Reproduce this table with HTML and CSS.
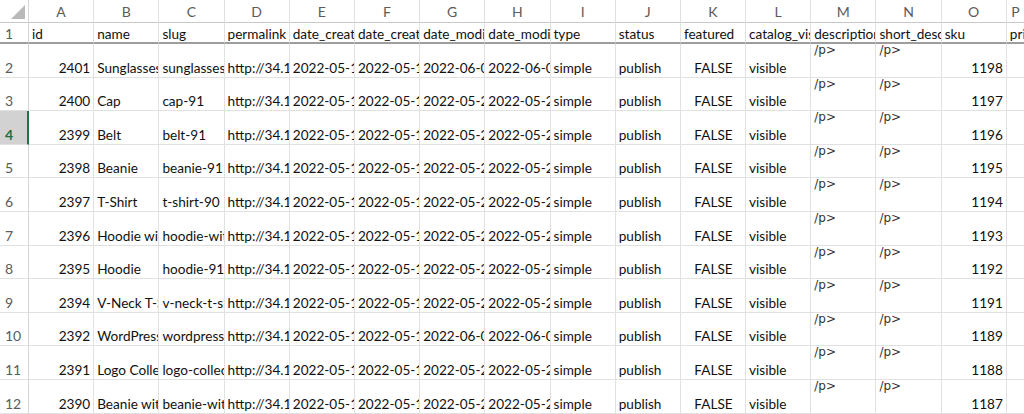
FILE: index.html
```html
<!DOCTYPE html>
<html>
<head>
<meta charset="utf-8">
<link rel="stylesheet" href="styles.css">
</head>
<body>
<div class="sheet">
  <div class="corner"><span class="tri"></span></div>
  <div class="ch">A</div><div class="ch">B</div><div class="ch">C</div><div class="ch">D</div><div class="ch">E</div><div class="ch">F</div><div class="ch">G</div><div class="ch">H</div><div class="ch">I</div><div class="ch">J</div><div class="ch">K</div><div class="ch">L</div><div class="ch">M</div><div class="ch">N</div><div class="ch">O</div><div class="ch last">P</div>

  <div class="rh r1">1</div>
  <div class="c r1">id</div><div class="c r1">name</div><div class="c r1">slug</div><div class="c r1">permalink</div><div class="c r1">date_created</div><div class="c r1">date_created_gmt</div><div class="c r1">date_modified</div><div class="c r1">date_modified_gmt</div><div class="c r1">type</div><div class="c r1">status</div><div class="c r1">featured</div><div class="c r1">catalog_visibility</div><div class="c r1">description</div><div class="c r1">short_description</div><div class="c r1">sku</div><div class="c r1 last">price</div>

  <div class="rh">2</div>
  <div class="c n">2401</div><div class="c">Sunglasses</div><div class="c">sunglasses</div><div class="c">http://34.122.12.56/product/sunglasses/</div><div class="c">2022-05-18T10:44:12</div><div class="c">2022-05-18T10:44:12</div><div class="c">2022-06-02T09:11:40</div><div class="c">2022-06-02T09:11:40</div><div class="c">simple</div><div class="c">publish</div><div class="c ctr">FALSE</div><div class="c">visible</div><div class="c top">/p&gt;</div><div class="c top">/p&gt;</div><div class="c n">1198</div><div class="c last"></div>

  <div class="rh">3</div>
  <div class="c n">2400</div><div class="c">Cap</div><div class="c">cap-91</div><div class="c">http://34.122.12.56/product/cap-91/</div><div class="c">2022-05-18T10:44:12</div><div class="c">2022-05-18T10:44:12</div><div class="c">2022-05-20T08:01:33</div><div class="c">2022-05-20T08:01:33</div><div class="c">simple</div><div class="c">publish</div><div class="c ctr">FALSE</div><div class="c">visible</div><div class="c top">/p&gt;</div><div class="c top">/p&gt;</div><div class="c n">1197</div><div class="c last"></div>

  <div class="rh sel">4</div>
  <div class="c n">2399</div><div class="c">Belt</div><div class="c">belt-91</div><div class="c">http://34.122.12.56/product/belt-91/</div><div class="c">2022-05-18T10:44:12</div><div class="c">2022-05-18T10:44:12</div><div class="c">2022-05-20T08:01:33</div><div class="c">2022-05-20T08:01:33</div><div class="c">simple</div><div class="c">publish</div><div class="c ctr">FALSE</div><div class="c">visible</div><div class="c top">/p&gt;</div><div class="c top">/p&gt;</div><div class="c n">1196</div><div class="c last"></div>

  <div class="rh">5</div>
  <div class="c n">2398</div><div class="c">Beanie</div><div class="c">beanie-91</div><div class="c">http://34.122.12.56/product/beanie-91/</div><div class="c">2022-05-18T10:44:12</div><div class="c">2022-05-18T10:44:12</div><div class="c">2022-05-20T08:01:33</div><div class="c">2022-05-20T08:01:33</div><div class="c">simple</div><div class="c">publish</div><div class="c ctr">FALSE</div><div class="c">visible</div><div class="c top">/p&gt;</div><div class="c top">/p&gt;</div><div class="c n">1195</div><div class="c last"></div>

  <div class="rh">6</div>
  <div class="c n">2397</div><div class="c">T-Shirt</div><div class="c">t-shirt-90</div><div class="c">http://34.122.12.56/product/t-shirt-90/</div><div class="c">2022-05-18T10:44:12</div><div class="c">2022-05-18T10:44:12</div><div class="c">2022-05-20T08:01:33</div><div class="c">2022-05-20T08:01:33</div><div class="c">simple</div><div class="c">publish</div><div class="c ctr">FALSE</div><div class="c">visible</div><div class="c top">/p&gt;</div><div class="c top">/p&gt;</div><div class="c n">1194</div><div class="c last"></div>

  <div class="rh">7</div>
  <div class="c n">2396</div><div class="c">Hoodie with Zipper</div><div class="c">hoodie-with-zipper-91</div><div class="c">http://34.122.12.56/product/hoodie-with-zipper-91/</div><div class="c">2022-05-18T10:44:12</div><div class="c">2022-05-18T10:44:12</div><div class="c">2022-05-20T08:01:33</div><div class="c">2022-05-20T08:01:33</div><div class="c">simple</div><div class="c">publish</div><div class="c ctr">FALSE</div><div class="c">visible</div><div class="c top">/p&gt;</div><div class="c top">/p&gt;</div><div class="c n">1193</div><div class="c last"></div>

  <div class="rh">8</div>
  <div class="c n">2395</div><div class="c">Hoodie</div><div class="c">hoodie-91</div><div class="c">http://34.122.12.56/product/hoodie-91/</div><div class="c">2022-05-18T10:44:12</div><div class="c">2022-05-18T10:44:12</div><div class="c">2022-05-20T08:01:33</div><div class="c">2022-05-20T08:01:33</div><div class="c">simple</div><div class="c">publish</div><div class="c ctr">FALSE</div><div class="c">visible</div><div class="c top">/p&gt;</div><div class="c top">/p&gt;</div><div class="c n">1192</div><div class="c last"></div>

  <div class="rh">9</div>
  <div class="c n">2394</div><div class="c">V-Neck T-Shirt</div><div class="c">v-neck-t-shirt-91</div><div class="c">http://34.122.12.56/product/v-neck-t-shirt-91/</div><div class="c">2022-05-18T10:44:12</div><div class="c">2022-05-18T10:44:12</div><div class="c">2022-05-20T08:01:33</div><div class="c">2022-05-20T08:01:33</div><div class="c">simple</div><div class="c">publish</div><div class="c ctr">FALSE</div><div class="c">visible</div><div class="c top">/p&gt;</div><div class="c top">/p&gt;</div><div class="c n">1191</div><div class="c last"></div>

  <div class="rh">10</div>
  <div class="c n">2392</div><div class="c">WordPress Pennant</div><div class="c">wordpress-pennant-91</div><div class="c">http://34.122.12.56/product/wordpress-pennant-91/</div><div class="c">2022-05-18T10:44:12</div><div class="c">2022-05-18T10:44:12</div><div class="c">2022-06-02T09:11:40</div><div class="c">2022-06-02T09:11:40</div><div class="c">simple</div><div class="c">publish</div><div class="c ctr">FALSE</div><div class="c">visible</div><div class="c top">/p&gt;</div><div class="c top">/p&gt;</div><div class="c n">1189</div><div class="c last"></div>

  <div class="rh">11</div>
  <div class="c n">2391</div><div class="c">Logo Collection</div><div class="c">logo-collection-91</div><div class="c">http://34.122.12.56/product/logo-collection-91/</div><div class="c">2022-05-18T10:44:12</div><div class="c">2022-05-18T10:44:12</div><div class="c">2022-05-20T08:01:33</div><div class="c">2022-05-20T08:01:33</div><div class="c">simple</div><div class="c">publish</div><div class="c ctr">FALSE</div><div class="c">visible</div><div class="c top">/p&gt;</div><div class="c top">/p&gt;</div><div class="c n">1188</div><div class="c last"></div>

  <div class="rh">12</div>
  <div class="c n">2390</div><div class="c">Beanie with Logo</div><div class="c">beanie-with-logo-91</div><div class="c">http://34.122.12.56/product/beanie-with-logo-91/</div><div class="c">2022-05-18T10:44:12</div><div class="c">2022-05-18T10:44:12</div><div class="c">2022-05-20T08:01:33</div><div class="c">2022-05-20T08:01:33</div><div class="c">simple</div><div class="c">publish</div><div class="c ctr">FALSE</div><div class="c">visible</div><div class="c top">/p&gt;</div><div class="c top">/p&gt;</div><div class="c n">1187</div><div class="c last"></div>
</div>
</body>
</html>
```

FILE: styles.css
```css
html, body {
  margin: 0;
  padding: 0;
  background: #ffffff;
  overflow: hidden;
}

.sheet {
  display: grid;
  grid-template-columns: 29px repeat(15, 65.2px) 1fr;
  grid-template-rows: 23px 21px repeat(11, 33.6px);
  width: 1024px;
  height: 414px;
  overflow: hidden;
  font-family: Lato, "Open Sans", sans-serif;
  font-size: 13.6px;
  color: #111111;
}

.corner {
  background: #ffffff;
  border-right: 1px solid #d6d6d6;
  border-bottom: 1px solid #c8c8c8;
  position: relative;
}

.tri {
  position: absolute;
  right: 3px;
  bottom: 3px;
  width: 0;
  height: 0;
  border-left: 14px solid transparent;
  border-bottom: 14px solid #b9b9b9;
}

.ch {
  background: #ffffff;
  border-right: 1px solid #e0e0e0;
  border-bottom: 1px solid #c8c8c8;
  color: #5b5b5b;
  font-size: 14px;
  display: flex;
  align-items: center;
  justify-content: center;
  padding-top: 1px;
}

.rh {
  background: #ffffff;
  border-right: 1px solid #d6d6d6;
  border-bottom: 1px solid #e1e1e1;
  color: #5b5b5b;
  font-size: 14px;
  display: flex;
  align-items: flex-end;
  justify-content: flex-start;
  padding: 0 0 1px 5px;
  box-sizing: border-box;
}

.rh.r1 {
  padding-bottom: 0;
}

.rh.sel {
  background: #d2d2d2;
  color: #1f6e43;
  font-weight: 700;
  border-right: 2px solid #217346;
}

.c {
  border-right: 1px solid #e1e1e1;
  border-bottom: 1px solid #e1e1e1;
  white-space: nowrap;
  overflow: hidden;
  display: flex;
  align-items: flex-end;
  justify-content: flex-start;
  padding: 0 2px 1px 3px;
  line-height: 16px;
  box-sizing: border-box;
  min-width: 0;
}

.r1 {
  border-bottom: 2px solid #9e9e9e;
  padding-bottom: 0;
}

.c.n {
  justify-content: flex-end;
  padding-right: 3px;
}

.c.ctr {
  justify-content: center;
}

.c.top {
  align-items: flex-start;
  padding-top: 0;
  font-family: "DejaVu Sans", Verdana, sans-serif;
  font-size: 12px;
  line-height: 12px;
  color: #333333;
}

.last {
  border-right: none;
}
```
